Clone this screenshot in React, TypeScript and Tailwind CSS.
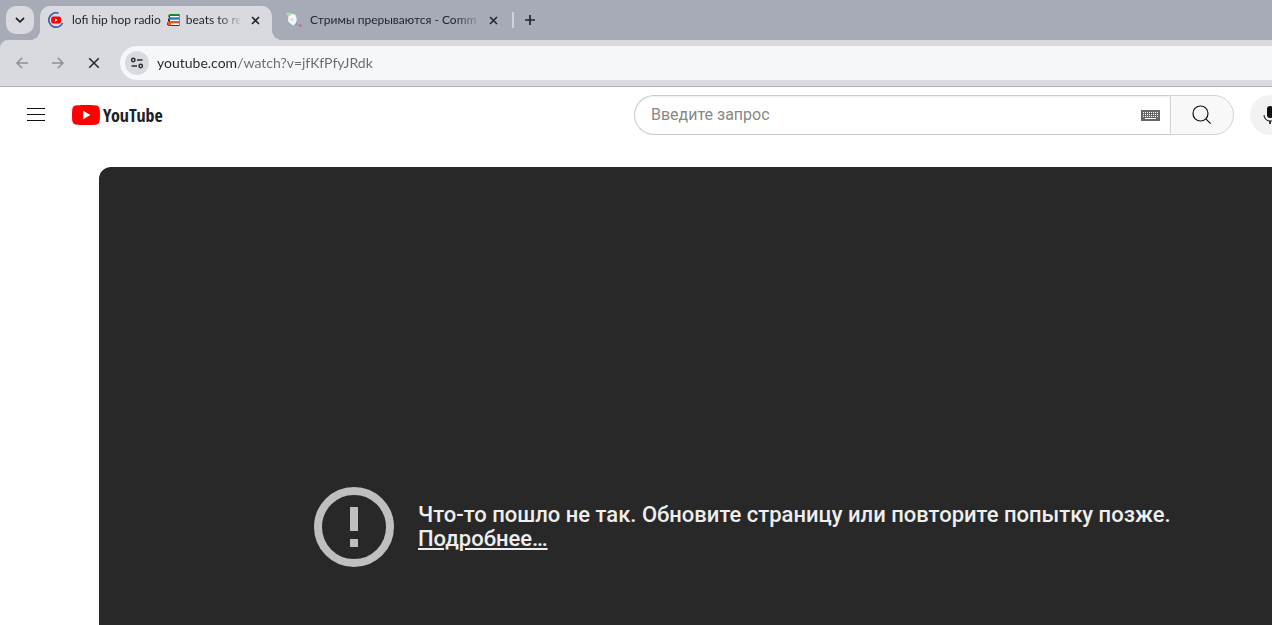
import React from "react";

function CloseIcon() {
  return (
    <svg viewBox="0 0 9 9" className="size-[9px]" fill="none" stroke="currentColor" strokeWidth="1.6" aria-hidden="true">
      <path d="M1 1l7 7M8 1L1 8" />
    </svg>
  );
}

function LoadingFavicon() {
  return (
    <svg viewBox="0 0 16 16" className="size-4 shrink-0" aria-hidden="true">
      <path d="M10.500 1.200A7.200 7.200 0 1 0 14.600 11" fill="none" stroke="#41619d" strokeWidth="1.700" />
      <rect x="3.200" y="4.500" width="9.800" height="7" rx="2" fill="#f00" />
      <path d="M7 6.500v3.200l2.800-1.600z" fill="#fff" />
    </svg>
  );
}

function MascotFavicon() {
  return (
    <svg viewBox="0 0 16 16" className="size-4 shrink-0" aria-hidden="true">
      <path d="M2.500 3.500C4 1 8.500 1 10 4l.8 3.500-1 3.500-2 2.500-3-1.500L2 9z" fill="#f4f5f5" />
      <path d="M0 .6l4 .3 1.500 1.700-2 1.500L.8 3z" fill="#a9dfac" />
      <path d="M4.500 6.500h3v2h-3z" fill="#d7d9d9" />
      <path d="M8.500 12l2.500-.5 1 1.500-2.500 1z" fill="#6bb8c4" />
      <path d="M12 13l3.500-1v2.300l-2 .7z" fill="#d7619f" />
      <path d="M10 11.500l1.500.3-.5 1z" fill="#5862a8" />
    </svg>
  );
}

function BooksIcon() {
  return (
    <svg viewBox="0 0 13 12" className="mx-1.5 h-3 w-[13px] shrink-0" role="img" aria-label="books">
      <path d="M3 0h9.500v4H2.500L1.500 3V1.500z" fill="#25372b" />
      <path d="M2.500.3H12L11.500 1.800H2z" fill="#16a336" />
      <path d="M3 2h9v1.500H3z" fill="#fff" />
      <path d="M2 4h10.500v3.800H2L1 7V5z" fill="#20323f" />
      <path d="M2 4.200h10v1.300H2z" fill="#1c8fd6" />
      <path d="M3 5.600h9v1.700H3z" fill="#fff" />
      <path d="M1 7.800h11.500V12H1.500L0 10.500V9z" fill="#54291b" />
      <path d="M1 8h10.500v1.300H5v2.200H1.500L.5 10z" fill="#ee5a1c" />
      <path d="M4 9.300h8v1.700H4z" fill="#fff" />
    </svg>
  );
}

function TabStrip() {
  return (
    <div className="flex h-10 items-end overflow-hidden bg-[#a7abb7] pl-1.5 font-['Lato',sans-serif] text-[12px] leading-4 text-[#25262b]">
      <button aria-label="Search tabs" className="mb-1.5 flex size-7 items-center justify-center rounded-[10px] bg-[#d9dadf]">
        <svg viewBox="0 0 10 6" className="h-1.5 w-2.5" fill="none" stroke="currentColor" strokeWidth="1.8" aria-hidden="true">
          <path d="M1 1l4 3.800L9 1" />
        </svg>
      </button>
      <div className="relative ml-1.5 flex h-[34px] w-[232px] items-center rounded-t-[10px] bg-[#d9dadf] pb-1.5 pl-2 pr-3">
        <span className="absolute -left-2.5 bottom-0 size-2.5 bg-[radial-gradient(circle_at_0_0,transparent_10px,#d9dadf_10px)]" />
        <span className="absolute -right-2.5 bottom-0 size-2.5 bg-[radial-gradient(circle_at_100%_0,transparent_10px,#d9dadf_10px)]" />
        <LoadingFavicon />
        <div className="ml-2 flex w-[168px] items-center overflow-hidden whitespace-nowrap [mask-image:linear-gradient(to_right,#000_145px,transparent_172px)]">
          <span>lofi hip hop radio</span>
          <BooksIcon />
          <span>beats to re</span>
        </div>
        <button aria-label="Close tab" className="ml-auto"><CloseIcon /></button>
      </div>
      <div className="flex h-[34px] w-60 items-center pb-1.5 pl-3.5 pr-3.5">
        <MascotFavicon />
        <div className="ml-2 w-[168px] overflow-hidden whitespace-nowrap [mask-image:linear-gradient(to_right,#000_145px,transparent_172px)]">
          Стримы прерываются - Comm
        </div>
        <button aria-label="Close tab" className="ml-auto"><CloseIcon /></button>
      </div>
      <span className="mb-3 h-4 w-0.5 bg-[#d1d3da]" />
      <button aria-label="New tab" className="mb-[15px] ml-[11px]">
        <svg viewBox="0 0 10 10" className="size-2.5" stroke="currentColor" strokeWidth="1.700" aria-hidden="true">
          <path d="M5 0v10M0 5h10" />
        </svg>
      </button>
    </div>
  );
}

function Toolbar() {
  return (
    <div className="bg-[#a7abb7]">
      <div className="flex h-[47px] items-center rounded-tl-lg border-b border-[#b0afb7] bg-[#d9dadf] pl-4">
        <button aria-label="Back" className="text-[#8e9095]">
          <svg viewBox="0 0 12 12" className="size-3" fill="none" stroke="currentColor" strokeWidth="1.500" aria-hidden="true">
            <path d="M12 6H1.200M6.200.8L1 6l5.200 5.200" />
          </svg>
        </button>
        <button aria-label="Forward" className="ml-6 text-[#8e9095]">
          <svg viewBox="0 0 12 12" className="size-3" fill="none" stroke="currentColor" strokeWidth="1.500" aria-hidden="true">
            <path d="M0 6h10.800M5.800.8L11 6l-5.200 5.200" />
          </svg>
        </button>
        <button aria-label="Stop loading" className="ml-6 text-[#2c2d31]">
          <svg viewBox="0 0 12 12" className="size-3" fill="none" stroke="currentColor" strokeWidth="1.600" aria-hidden="true">
            <path d="M1.200 1.200l9.600 9.600M10.800 1.200l-9.600 9.600" />
          </svg>
        </button>
        <div className="ml-5 flex h-[34px] flex-1 items-center rounded-l-full bg-[#f5f7f9] pl-[5px]">
          <button aria-label="Site information" className="flex size-6 shrink-0 items-center justify-center rounded-full bg-[#d9dadf] text-[#2c2d31]">
            <svg viewBox="0 0 14 12" className="h-3 w-3.5" fill="none" stroke="currentColor" strokeWidth="1.500" aria-hidden="true">
              <circle cx="3.300" cy="3" r="1.700" />
              <path d="M7 3h5.500M1.500 9H7" />
              <circle cx="10.700" cy="9" r="1.700" />
            </svg>
          </button>
          <input
            aria-label="Address"
            defaultValue="youtube.com/watch?v=jfKfPfyJRdk"
            className="ml-2 min-w-0 flex-1 bg-[linear-gradient(to_right,#24282e_80px,#686a6f_80px)] bg-clip-text font-['Lato',sans-serif] text-[14px] leading-5 text-transparent outline-none"
          />
        </div>
      </div>
    </div>
  );
}

function KeyboardIcon() {
  return (
    <svg viewBox="0 0 19 11" className="h-[11px] w-[19px]" aria-hidden="true" shapeRendering="crispEdges">
      <rect width="19" height="11" fill="#666" />
      <path d="M2 2.500h15M2 4.500h15M2 6.500h15" stroke="#fff" strokeDasharray="1 1" />
      <path d="M4 8.500h11" stroke="#fff" />
    </svg>
  );
}

function Masthead() {
  return (
    <header className="flex h-14 items-center overflow-hidden pl-[27px]">
      <button aria-label="Menu">
        <svg viewBox="0 0 18 14" className="h-3.5 w-[18px]" stroke="#0f0f0f" shapeRendering="crispEdges" aria-hidden="true">
          <path d="M0 .5h18M0 6.500h18M0 12.500h18" />
        </svg>
      </button>
      <a href="#home" className="ml-[27px] flex items-center gap-[3px]">
        <svg viewBox="0 0 28 20" className="h-5 w-7" aria-hidden="true">
          <path d="M27.400 3.100A3.500 3.500 0 0 0 24.900.6C22.700 0 14 0 14 0S5.300 0 3.100.6A3.500 3.500 0 0 0 .6 3.100C0 5.300 0 10 0 10s0 4.700.6 6.900a3.500 3.500 0 0 0 2.500 2.500C5.300 20 14 20 14 20s8.700 0 10.900-.6a3.500 3.500 0 0 0 2.500-2.500C28 14.700 28 10 28 10s0-4.700-.6-6.900z" fill="#f00" />
          <path d="M11.200 14.300l7.200-4.300-7.200-4.300z" fill="#fff" />
        </svg>
        <span className="font-['Open_Sans_Condensed','Roboto_Condensed',sans-serif] text-[18px] font-bold leading-5 text-[#212121]">YouTube</span>
      </a>
      <form className="ml-auto flex h-10 w-[600px] shrink-0" onSubmit={(e) => e.preventDefault()}>
        <div className="flex flex-1 items-center rounded-l-full border border-r-0 border-[#ccc] pl-4 pr-2.5 shadow-[inset_0_1px_2px_#eee]">
          <input
            aria-label="Введите запрос"
            placeholder="Введите запрос"
            className="min-w-0 flex-1 font-['Roboto',sans-serif] text-[16px] leading-6 outline-none placeholder:text-[#888]"
          />
          <button type="button" aria-label="Keyboard"><KeyboardIcon /></button>
        </div>
        <button aria-label="Search" className="flex w-16 items-center justify-center rounded-r-full border border-[#d3d3d3] bg-[#f8f8f8]">
          <svg viewBox="0 0 24 24" className="size-6" fill="none" stroke="#0f0f0f" strokeWidth="1.200" aria-hidden="true">
            <circle cx="10.500" cy="10.500" r="7.500" />
            <path d="M15.800 15.800l4.800 4.800" />
          </svg>
        </button>
      </form>
      <button aria-label="Voice search" className="-mr-[18px] ml-4 flex size-10 shrink-0 items-center justify-center rounded-full bg-[#f2f2f2]">
        <svg viewBox="0 0 24 24" className="size-6" aria-hidden="true">
          <path d="M12 3a3 3 0 0 0-3 3v6a3 3 0 0 0 6 0V6a3 3 0 0 0-3-3zm6.500 9h-1a5.500 5.500 0 0 1-11 0h-1a6.500 6.500 0 0 0 5.700 6.440V21h1.600v-2.560A6.500 6.500 0 0 0 18.500 12z" fill="#0f0f0f" />
        </svg>
      </button>
    </header>
  );
}

export default function App() {
  return (
    <div className="flex min-h-screen flex-col overflow-hidden bg-white">
      <TabStrip />
      <Toolbar />
      <Masthead />
      <main className="flex flex-1 flex-col pl-[99px] pt-6">
        <section className="flex flex-1 flex-col justify-end rounded-tl-xl bg-[#282828] pb-[58px] pl-[215px] pr-6">
          <div className="flex items-center gap-6">
            <svg viewBox="0 0 80 80" className="size-20 shrink-0" aria-hidden="true">
              <circle cx="40" cy="40" r="36" fill="none" stroke="#bfbfbf" strokeWidth="8" />
              <path d="M36 20h8v24h-8zM36 52h8v8h-8z" fill="#bfbfbf" />
            </svg>
            <p className="font-['Roboto',sans-serif] text-[22px] font-medium leading-6 text-[#eee]">
              Что-то пошло не так. Обновите страницу или повторите попытку позже.
              <br />
              <a href="#details" className="underline">Подробнее…</a>
            </p>
          </div>
        </section>
      </main>
    </div>
  );
}
